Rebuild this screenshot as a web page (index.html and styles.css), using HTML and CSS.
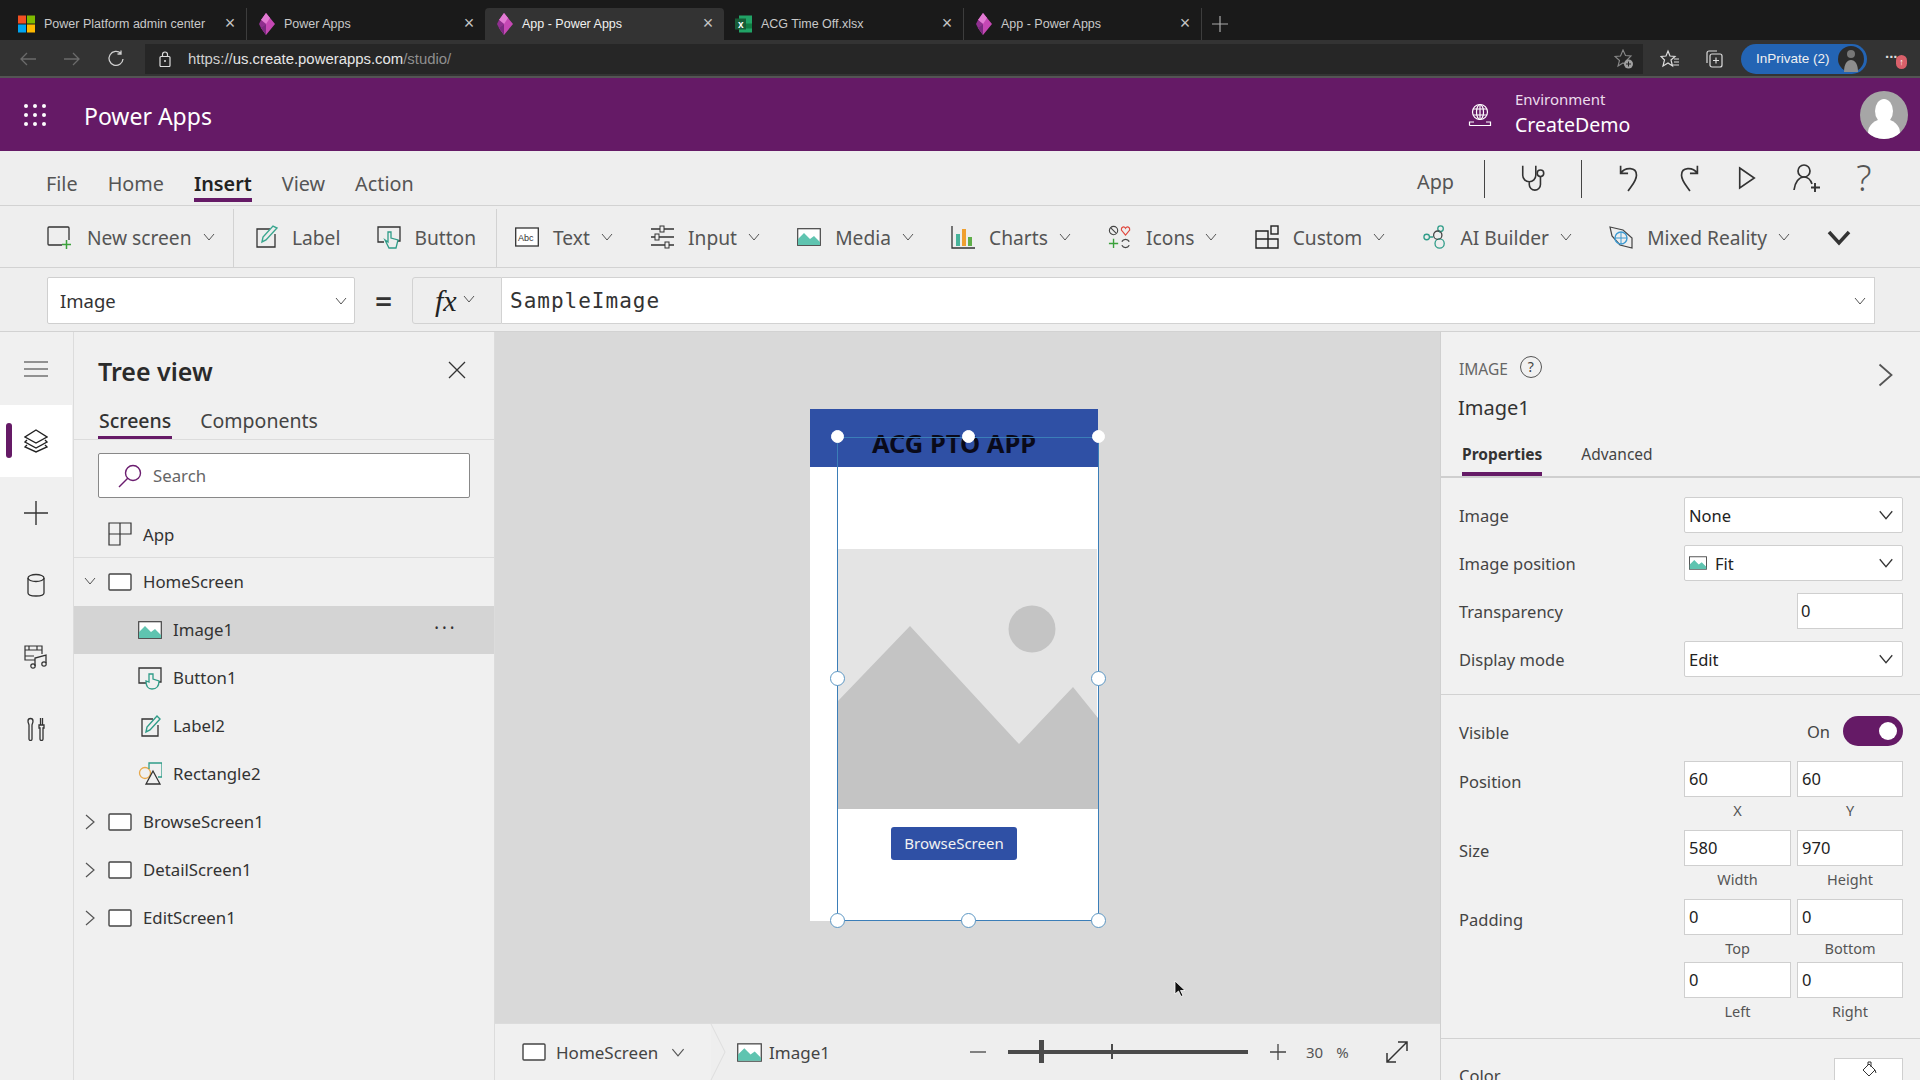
FILE: index.html
```html
<!DOCTYPE html>
<html>
<head>
    <meta charset="utf-8">
    <title>App - Power Apps</title>
    <link rel="stylesheet" href="styles.css">
</head>
<body>
    <svg class="defs" width="0" height="0">
        <symbol id="pa-logo" viewBox="0 0 17 24"><path d="M8 1 17 12 8 23 3 16 6 12 3 8Z" fill="#c548b4"/><path d="M3 8 8 1 12 6 8 12Z" fill="#e27bd3"/><path d="M1 12 3 8 8 12 3 16Z" fill="#8f2f8f"/><path d="M8 23 3 16 8 12Z" fill="#7a2a80"/></symbol>
        <symbol id="chev-down" viewBox="0 0 12 8"><path d="M1 1 6 7 11 1" fill="none" stroke="currentColor" stroke-width="1"/></symbol>
        <symbol id="chev-right" viewBox="0 0 10 16"><path d="M1 1 9 8 1 15" fill="none" stroke="#555" stroke-width="1.2"/></symbol>
        <symbol id="screen" viewBox="0 0 24 18"><rect x="1" y="1" width="22" height="16" rx="1" fill="#fff" stroke="#444" stroke-width="1.4"/></symbol>
        <symbol id="image" viewBox="0 0 24 18"><rect x=".7" y=".7" width="22.6" height="16.6" fill="#fff" stroke="#444" stroke-width="1.2"/><path d="M1 17V11L7 5 13 11 17 8 23 14V17Z" fill="#5fc4b0"/></symbol>
    </svg>

    <div class="tabbar">
        <div class="tab">
            <svg class="tab-icon" viewBox="0 0 17 17"><rect width="8" height="8" fill="#f25022"/><rect x="9" width="8" height="8" fill="#7fba00"/><rect y="9" width="8" height="8" fill="#00a4ef"/><rect x="9" y="9" width="8" height="8" fill="#ffb900"/></svg>
            <span class="tab-title">Power Platform admin center</span><span class="tab-close">×</span>
        </div>
        <div class="tab tab-sep">
            <svg class="tab-icon"><use href="#pa-logo"/></svg>
            <span class="tab-title">Power Apps</span><span class="tab-close">×</span>
        </div>
        <div class="tab active">
            <svg class="tab-icon"><use href="#pa-logo"/></svg>
            <span class="tab-title">App - Power Apps</span><span class="tab-close">×</span>
        </div>
        <div class="tab">
            <svg class="tab-icon" viewBox="0 0 17 17"><rect x="4" y="0" width="13" height="17" fill="#21a366"/><rect x="4" y="8" width="13" height="5" fill="#107c41"/><rect y="3" width="11" height="11" fill="#185c37"/><text x="3" y="12" class="xl-x">x</text></svg>
            <span class="tab-title">ACG Time Off.xlsx</span><span class="tab-close">×</span>
        </div>
        <div class="tab tab-sep tab-end">
            <svg class="tab-icon"><use href="#pa-logo"/></svg>
            <span class="tab-title">App - Power Apps</span><span class="tab-close">×</span>
        </div>
        <svg class="new-tab" viewBox="0 0 16 16"><path d="M8 0V16M0 8H16" stroke="#aaa" stroke-width="1.2"/></svg>
    </div>

    <div class="addressbar">
        <svg class="nav-icon" viewBox="0 0 18 18"><path d="M17 9H2M8 3 2 9 8 15" fill="none" stroke="#6b6b6b" stroke-width="1.3"/></svg>
        <svg class="nav-icon" viewBox="0 0 18 18"><path d="M1 9H16M10 3 16 9 10 15" fill="none" stroke="#6b6b6b" stroke-width="1.3"/></svg>
        <svg class="nav-icon" viewBox="0 0 18 18"><path d="M14 3.5A7 7 0 1 0 16 9M14 .5V4H10.5" fill="none" stroke="#d0d0d0" stroke-width="1.3"/></svg>
        <div class="url-field">
            <svg class="lock" viewBox="0 0 12 16"><rect x="1" y="5.5" width="10" height="10" rx="1" fill="none" stroke="#ddd" stroke-width="1.2"/><path d="M3.5 5.5V3.5A2.5 2.5 0 0 1 8.5 3.5V5.5" fill="none" stroke="#ddd" stroke-width="1.2"/><circle cx="6" cy="10" r="1" fill="#ddd"/></svg>
            <span class="url"><span class="url-dim">https://</span><span class="url-host">us.create.powerapps.com</span><span class="url-dim">/studio/</span></span>
            <svg class="star-add" viewBox="0 0 20 20"><path d="M9 1 11.5 6.5 17 7 13 11 14 17 9 14 4 17 5.5 11.5 1 7.5 6.5 7Z" fill="none" stroke="#888" stroke-width="1.1"/><circle cx="14.5" cy="15" r="4.5" fill="#a0a0a0"/><path d="M14.5 12.5V17.5M12 15H17" stroke="#262626"/></svg>
        </div>
        <svg class="bar-icon" viewBox="0 0 20 20"><path d="M8 2 10 7 15 7.5 11 11 12.5 17 8 14 3 17 4.5 11 1 7.5 6 7Z" fill="none" stroke="#ddd" stroke-width="1.2"/><path d="M14 10H19M14 13H19M13 16H19" stroke="#ddd"/></svg>
        <svg class="bar-icon" viewBox="0 0 20 20"><rect x="6" y="5" width="12" height="13" rx="2" fill="none" stroke="#ddd" stroke-width="1.2"/><path d="M12 8.5V14.5M9 11.5H15M3 14V4A2 2 0 0 1 5 2H13" fill="none" stroke="#ddd" stroke-width="1.2"/></svg>
        <div class="inprivate">
            <span>InPrivate (2)</span>
            <svg class="inprivate-pic" viewBox="0 0 26 26"><circle cx="13" cy="13" r="13" fill="#2b2b2b"/><circle cx="13" cy="8" r="4" fill="#777"/><path d="M6 26C6 18 9 14 13 14 17 14 20 18 20 26Z" fill="#8d8d8d"/></svg>
        </div>
        <div class="more-wrap">
            <span class="more-dots">...</span>
            <span class="more-badge">↑</span>
        </div>
    </div>

    <div class="app-header">
        <svg class="waffle" viewBox="0 0 24 24" fill="#fff"><circle cx="3" cy="3" r="2"/><circle cx="12" cy="3" r="2"/><circle cx="21" cy="3" r="2"/><circle cx="3" cy="12" r="2"/><circle cx="12" cy="12" r="2"/><circle cx="21" cy="12" r="2"/><circle cx="3" cy="21" r="2"/><circle cx="12" cy="21" r="2"/><circle cx="21" cy="21" r="2"/></svg>
        <div class="app-name">Power Apps</div>
        <svg class="env-icon" viewBox="0 0 24 24"><g fill="none" stroke="#fff" stroke-width="1.2"><circle cx="12" cy="9" r="7.5"/><ellipse cx="12" cy="9" rx="3.5" ry="7.5"/><path d="M5 6H19M5 12H19M12 1.5V16.5M1.5 22.5H22.5V19H18M6 19H1.5V22.5"/></g></svg>
        <div class="env">
            <div class="env-label">Environment</div>
            <div class="env-name">CreateDemo</div>
        </div>
        <svg class="user-pic" viewBox="0 0 48 48"><defs><clipPath id="user-clip"><circle cx="24" cy="24" r="24"/></clipPath></defs><circle cx="24" cy="24" r="24" fill="#a6a6a6"/><g clip-path="url(#user-clip)" fill="#fff"><ellipse cx="24" cy="20" rx="9" ry="12"/><ellipse cx="24" cy="42" rx="16" ry="14"/></g></svg>
    </div>

    <div class="menu">
        <div class="menu-item">File</div>
        <div class="menu-item">Home</div>
        <div class="menu-item selected">Insert</div>
        <div class="menu-item">View</div>
        <div class="menu-item">Action</div>
        <div class="menu-right">
            <span class="menu-app">App</span>
            <span class="menu-sep"></span>
            <svg class="tool stetho" viewBox="0 0 28 30"><path d="M3 2V12A7 7 0 0 0 17 12V2M10 19V22A6 6 0 0 0 22 22V14" fill="none" stroke="#333" stroke-width="1.7"/><circle cx="22" cy="10" r="3.5" fill="none" stroke="#333" stroke-width="1.7"/></svg>
            <span class="menu-sep"></span>
            <svg class="tool undo" viewBox="0 0 24 30"><path d="M3 2V10H11M3 10C8 3 20 3 20 12 20 18 15 23 11 29" fill="none" stroke="#333" stroke-width="1.8"/></svg>
            <svg class="tool redo" viewBox="0 0 24 30"><path d="M21 2V10H13M21 10C16 3 4 3 4 12 4 18 9 23 13 29" fill="none" stroke="#333" stroke-width="1.8"/></svg>
            <svg class="tool play" viewBox="0 0 22 26"><path d="M3 2 19 13 3 24Z" fill="none" stroke="#333" stroke-width="1.8"/></svg>
            <svg class="tool share" viewBox="0 0 28 28"><circle cx="11" cy="7" r="6" fill="none" stroke="#333" stroke-width="1.7"/><path d="M1 26C2 18 6 13 11 13 16 13 18 17 19 20" fill="none" stroke="#333" stroke-width="1.7"/><path d="M22 19V28M18 23.5H27" fill="none" stroke="#333" stroke-width="1.9"/></svg>
            <span class="help">?</span>
        </div>
    </div>

    <div class="ribbon">
        <div class="rib-group first">
            <div class="rib-item">
                <svg class="rib-icon" viewBox="0 0 24 24"><rect x="1" y="2" width="21" height="18" rx="1" fill="none" stroke="#333" stroke-width="1.3"/><rect x="15" y="15" width="9" height="9" fill="#eee"/><path d="M19.5 15V24M15 19.5H24" stroke="#3aa13a" stroke-width="1.5"/></svg>
                <span>New screen</span>
                <svg class="chev"><use href="#chev-down"/></svg>
            </div>
        </div>
        <div class="rib-group second">
            <div class="rib-item">
                <svg class="rib-icon" viewBox="0 0 24 24"><path d="M15 4H2V22H20V9" fill="none" stroke="#333" stroke-width="1.3"/><path d="M7 17 8 12 18 1 22 3 11 15Z" fill="none" stroke="#3aa68f" stroke-width="1.4"/></svg>
                <span>Label</span>
            </div>
            <div class="rib-item">
                <svg class="rib-icon" viewBox="0 0 24 24"><path d="M7 17H1V2H23V16H20" fill="none" stroke="#333" stroke-width="1.3"/><path d="M11 7V17L8 15 12 23H19L21 15 14 13V7Z" fill="#eee" stroke="#2f9c88" stroke-width="1.3"/></svg>
                <span>Button</span>
            </div>
        </div>
        <div class="rib-group rest">
            <div class="rib-item">
                <svg class="rib-icon" viewBox="0 0 24 20"><rect x=".7" y="1" width="22.6" height="18" fill="#fff" stroke="#333" stroke-width="1.3"/><text x="3" y="14" class="abc">Abc</text></svg>
                <span>Text</span>
                <svg class="chev"><use href="#chev-down"/></svg>
            </div>
            <div class="rib-item">
                <svg class="rib-icon" viewBox="0 0 24 24"><path d="M1 4H24M1 12H24M1 20H24" stroke="#333" stroke-width="1.3"/><rect x="10" y="1" width="4" height="6" fill="#eee" stroke="#333"/><rect x="5" y="9" width="4" height="6" fill="#eee" stroke="#333"/><rect x="15" y="17" width="4" height="6" fill="#eee" stroke="#333"/></svg>
                <span>Input</span>
                <svg class="chev"><use href="#chev-down"/></svg>
            </div>
            <div class="rib-item">
                <svg class="rib-icon"><use href="#image"/></svg>
                <span>Media</span>
                <svg class="chev"><use href="#chev-down"/></svg>
            </div>
            <div class="rib-item">
                <svg class="rib-icon" viewBox="0 0 24 24"><path d="M1 1V23H24" fill="none" stroke="#333" stroke-width="1.3"/><rect x="5" y="9" width="4" height="12" fill="#47b39a"/><rect x="11" y="4" width="4" height="17" fill="#f0a030"/><rect x="17" y="12" width="4" height="9" fill="#5fae4a"/></svg>
                <span>Charts</span>
                <svg class="chev"><use href="#chev-down"/></svg>
            </div>
            <div class="rib-item">
                <svg class="rib-icon" viewBox="0 0 26 26"><circle cx="6" cy="6" r="4.5" fill="none" stroke="#444" stroke-width="1.2"/><path d="M3 3 9 9" stroke="#444" stroke-width="1.2"/><path d="M19 11 14.5 5.5C14 2 17.5 1 19 3.5 20.5 1 24 2 23.5 5.5Z" fill="none" stroke="#e0483e" stroke-width="1.3"/><path d="M6 15V25M1 20H11" stroke="#3aa13a" stroke-width="1.5"/><path d="M15 18A4.5 4.5 0 0 1 23 18M23 22A4.5 4.5 0 0 1 15 22" fill="none" stroke="#444" stroke-width="1.4"/></svg>
                <span>Icons</span>
                <svg class="chev"><use href="#chev-down"/></svg>
            </div>
            <div class="rib-item">
                <svg class="rib-icon" viewBox="0 0 24 24"><path d="M1 6H13V23H1ZM1 14H23V23H13" fill="none" stroke="#222" stroke-width="1.4"/><rect x="16" y="1" width="7" height="8" fill="none" stroke="#222" stroke-width="1.4"/></svg>
                <span>Custom</span>
                <svg class="chev"><use href="#chev-down"/></svg>
            </div>
            <div class="rib-item">
                <svg class="rib-icon" viewBox="0 0 26 26"><g fill="none" stroke="#2f9c88" stroke-width="1.4"><circle cx="4" cy="13" r="3"/><circle cx="19" cy="4" r="3"/><circle cx="18" cy="20" r="5"/><circle cx="16" cy="11" r="4.5" stroke="#444"/><path d="M7 13H11M18 7V8M17 15V16"/></g></svg>
                <span>AI Builder</span>
                <svg class="chev"><use href="#chev-down"/></svg>
            </div>
            <div class="rib-item">
                <svg class="rib-icon" viewBox="0 0 24 24"><path d="M1 2 14 5 23 13V23L11 20 3 11Z" fill="none" stroke="#444" stroke-width="1.2"/><circle cx="12" cy="13" r="6" fill="none" stroke="#3d9ad1" stroke-width="1.4"/><path d="M6 13H18M12 7V19" stroke="#3d9ad1"/></svg>
                <span>Mixed Reality</span>
                <svg class="chev"><use href="#chev-down"/></svg>
            </div>
            <svg class="rib-more" viewBox="0 0 24 16"><path d="M2 2 12 13 22 2" fill="none" stroke="#333" stroke-width="3.5"/></svg>
        </div>
    </div>

    <div class="formula">
        <div class="prop-select">
            <span>Image</span>
            <svg class="chev"><use href="#chev-down"/></svg>
        </div>
        <div class="equals">=</div>
        <div class="fx-box">
            <span class="fx">fx</span>
            <svg class="chev"><use href="#chev-down"/></svg>
        </div>
        <div class="formula-input">
            <span class="code">SampleImage</span>
            <svg class="chev"><use href="#chev-down"/></svg>
        </div>
    </div>

    <div class="main">
        <div class="rail">
            <div class="rail-item">
                <svg class="rail-icon" viewBox="0 0 24 24"><path d="M0 5H24M0 12H24M0 19H24" stroke="#333" stroke-width="1.2"/></svg>
            </div>
            <div class="rail-item current">
                <span class="rail-bar"></span>
                <svg class="rail-icon" viewBox="0 0 24 24"><path d="M12 1 23 8 12 14 1 8Z" fill="none" stroke="#222" stroke-width="1.4"/><path d="M3 11 1 13 12 19 23 13 21 11M3 16 1 18 12 23 23 18 21 16" fill="none" stroke="#222" stroke-width="1.4"/></svg>
            </div>
            <div class="rail-item">
                <svg class="rail-icon" viewBox="0 0 24 24"><path d="M0 12H24M12 0V24" stroke="#333" stroke-width="1.4"/></svg>
            </div>
            <div class="rail-item">
                <svg class="rail-icon" viewBox="0 0 24 24"><ellipse cx="12" cy="5" rx="8" ry="3.5" fill="none" stroke="#333" stroke-width="1.3"/><path d="M4 5V20C4 24 20 24 20 20V5" fill="none" stroke="#333" stroke-width="1.3"/></svg>
            </div>
            <div class="rail-item">
                <svg class="rail-icon" viewBox="0 0 24 24"><path d="M11 15H1V1H18V9M1 5H18M1 11H10M5 1V5M13 1V5" fill="none" stroke="#333" stroke-width="1.2"/><path d="M11 21V13L22 10V18" fill="none" stroke="#333" stroke-width="1.3"/><circle cx="9" cy="21" r="2.2" fill="none" stroke="#333" stroke-width="1.2"/><circle cx="20" cy="19" r="2.2" fill="none" stroke="#333" stroke-width="1.2"/></svg>
            </div>
            <div class="rail-item">
                <svg class="rail-icon" viewBox="0 0 24 24"><path d="M4 4A2.5 2.5 0 0 1 9 4C9 6 8 7 8 8V22A1.5 1.5 0 0 1 5 22V8C5 7 4 6 4 4ZM15 8H20V11H19V22A1.5 1.5 0 0 1 16 22V11H15ZM16.5 8V1M18.5 8V1" fill="none" stroke="#333" stroke-width="1.3"/></svg>
            </div>
        </div>

        <div class="tree">
            <div class="tree-head">
                <div class="tree-title">Tree view</div>
                <svg class="tree-close" viewBox="0 0 18 18"><path d="M1 1 17 17M17 1 1 17" stroke="#333" stroke-width="1.3"/></svg>
            </div>
            <div class="tree-tabs">
                <div class="tree-tab on">Screens</div>
                <div class="tree-tab">Components</div>
            </div>
            <div class="search">
                <svg class="search-icon" viewBox="0 0 24 24"><circle cx="15" cy="9" r="7.5" fill="none" stroke="#6b1d6f" stroke-width="1.4"/><path d="M10 14 1 23" stroke="#6b1d6f" stroke-width="1.4"/></svg>
                <span>Search</span>
            </div>
            <div class="tree-app">
                <svg class="row-icon" viewBox="0 0 24 24"><path d="M1 1H23V12H12V23H1ZM1 12H12V1" fill="none" stroke="#333" stroke-width="1.2"/></svg>
                <span>App</span>
            </div>
            <div class="row screen-row">
                <svg class="twist down"><use href="#chev-down"/></svg>
                <svg class="row-icon flat"><use href="#screen"/></svg>
                <span>HomeScreen</span>
            </div>
            <div class="row child picked">
                <svg class="row-icon flat"><use href="#image"/></svg>
                <span>Image1</span>
                <span class="dots">•••</span>
            </div>
            <div class="row child">
                <svg class="row-icon" viewBox="0 0 24 24"><path d="M8 17H1V2H23V16H21" fill="none" stroke="#333" stroke-width="1.3"/><path d="M11 8V16L8 15C8 20 10 23 14 23 18 23 21 21 21 15L15 13V8Z" fill="#f0f0f0" stroke="#2f9c88" stroke-width="1.3"/></svg>
                <span>Button1</span>
            </div>
            <div class="row child">
                <svg class="row-icon" viewBox="0 0 24 24"><path d="M15 5H4V22H20V11" fill="none" stroke="#333" stroke-width="1.3"/><path d="M8 18 9 13 19 2 22 5 12 16Z" fill="none" stroke="#2f9c88" stroke-width="1.4"/></svg>
                <span>Label2</span>
            </div>
            <div class="row child">
                <svg class="row-icon" viewBox="0 0 24 24"><circle cx="7" cy="11" r="5.5" fill="none" stroke="#e8a84a" stroke-width="1.3"/><path d="M11 7V1H24V15H20" fill="none" stroke="#2f9c88" stroke-width="1.3"/><path d="M15 9 8 22H22Z" fill="#f0f0f0" stroke="#333" stroke-width="1.3"/></svg>
                <span>Rectangle2</span>
            </div>
            <div class="row screen-row">
                <svg class="twist"><use href="#chev-right"/></svg>
                <svg class="row-icon flat"><use href="#screen"/></svg>
                <span>BrowseScreen1</span>
            </div>
            <div class="row screen-row">
                <svg class="twist"><use href="#chev-right"/></svg>
                <svg class="row-icon flat"><use href="#screen"/></svg>
                <span>DetailScreen1</span>
            </div>
            <div class="row screen-row">
                <svg class="twist"><use href="#chev-right"/></svg>
                <svg class="row-icon flat"><use href="#screen"/></svg>
                <span>EditScreen1</span>
            </div>
        </div>

        <div class="stage">
            <div class="canvas">
                <div class="phone">
                    <div class="phone-head"></div>
                </div>
                <svg class="placeholder" viewBox="0 0 261 260" preserveAspectRatio="none">
                    <rect x="1" width="259" height="260" fill="#e4e4e4"/>
                    <circle cx="195" cy="80" r="23.5" fill="#c4c4c4"/>
                    <path d="M0 153 73 77 182 195 236 138 261 169V260H0Z" fill="#c4c4c4"/>
                </svg>
                <div class="phone-title">ACG PTO APP</div>
                <div class="phone-btn">BrowseScreen</div>
                <div class="sel-box"></div>
                <span class="grip solid g-tl"></span>
                <span class="grip solid g-tc"></span>
                <span class="grip solid g-tr"></span>
                <span class="grip g-ml"></span>
                <span class="grip g-mr"></span>
                <span class="grip g-bl"></span>
                <span class="grip g-bc"></span>
                <span class="grip g-br"></span>
                <svg class="pointer" viewBox="0 0 12 18"><path d="M1 1V14L4.5 11 7 16.5 9 15.5 6.5 10.5 11 10.5Z" fill="#111" stroke="#fff" stroke-width=".8"/></svg>
            </div>
            <div class="stage-bar">
                <div class="crumb first-crumb">
                    <svg class="crumb-icon"><use href="#screen"/></svg>
                    <span>HomeScreen</span>
                    <svg class="crumb-chev"><use href="#chev-down"/></svg>
                    <svg class="crumb-arrow" viewBox="0 0 16 58" preserveAspectRatio="none"><path d="M1 0 15 29 1 58" fill="none" stroke="#dcdcdc"/></svg>
                </div>
                <div class="crumb">
                    <svg class="crumb-image"><use href="#image"/></svg>
                    <span>Image1</span>
                </div>
                <div class="zoom">
                    <svg class="zoom-sign" viewBox="0 0 16 16"><path d="M0 8H16" stroke="#444" stroke-width="1.3"/></svg>
                    <div class="slider"><span class="thumb"></span><span class="tick"></span></div>
                    <svg class="zoom-sign" viewBox="0 0 16 16"><path d="M0 8H16M8 0V16" stroke="#444" stroke-width="1.3"/></svg>
                    <span class="zoom-num">30</span>
                    <span class="zoom-pct">%</span>
                    <svg class="expand" viewBox="0 0 24 24"><path d="M2 22 22 2M13 2H22V11M2 13V22H11" fill="none" stroke="#333" stroke-width="1.5"/></svg>
                </div>
            </div>
        </div>

        <div class="props">
            <div class="props-kind">
                <span>IMAGE</span>
                <span class="kind-help">?</span>
                <svg class="props-collapse"><use href="#chev-right"/></svg>
            </div>
            <div class="props-name">Image1</div>
            <div class="props-tabs">
                <div class="props-tab on">Properties</div>
                <div class="props-tab">Advanced</div>
            </div>
            <div class="props-group top-group">
                <div class="prop-row">
                    <label>Image</label>
                    <div class="dd"><span>None</span><svg class="dd-chev"><use href="#chev-down"/></svg></div>
                </div>
                <div class="prop-row">
                    <label>Image position</label>
                    <div class="dd"><svg class="dd-image"><use href="#image"/></svg><span>Fit</span><svg class="dd-chev"><use href="#chev-down"/></svg></div>
                </div>
                <div class="prop-row">
                    <label>Transparency</label>
                    <div class="pair"><div></div><div class="num">0</div></div>
                </div>
                <div class="prop-row">
                    <label>Display mode</label>
                    <div class="dd"><span>Edit</span><svg class="dd-chev"><use href="#chev-down"/></svg></div>
                </div>
            </div>
            <div class="props-group layout-group">
                <div class="visible-row">
                    <label>Visible</label>
                    <span class="on-text">On</span>
                    <span class="toggle"><span class="knob"></span></span>
                </div>
                <div class="prop-row tall">
                    <label>Position</label>
                    <div class="pair">
                        <div class="field"><div class="num">60</div><small>X</small></div>
                        <div class="field"><div class="num">60</div><small>Y</small></div>
                    </div>
                </div>
                <div class="prop-row tall">
                    <label>Size</label>
                    <div class="pair">
                        <div class="field"><div class="num">580</div><small>Width</small></div>
                        <div class="field"><div class="num">970</div><small>Height</small></div>
                    </div>
                </div>
                <div class="prop-row tall">
                    <label>Padding</label>
                    <div class="pair">
                        <div class="field"><div class="num">0</div><small>Top</small></div>
                        <div class="field"><div class="num">0</div><small>Bottom</small></div>
                    </div>
                </div>
                <div class="prop-row tall">
                    <label></label>
                    <div class="pair">
                        <div class="field"><div class="num">0</div><small>Left</small></div>
                        <div class="field"><div class="num">0</div><small>Right</small></div>
                    </div>
                </div>
            </div>
            <div class="color-row">
                <label>Color</label>
                <div class="color-box">
                    <svg class="bucket" viewBox="0 0 16 16"><path d="M2 9 8 3 14 9 8 15ZM7 4V1H10V6M14 9 15 12" fill="none" stroke="#333"/></svg>
                </div>
            </div>
        </div>
    </div>
</body>
</html>
```

FILE: styles.css
```css
* {
    box-sizing: border-box;
}

html, body {
    margin: 0;
    height: 1080px;
    overflow: hidden;
}

body {
    font-family: "Noto Sans", "Open Sans", sans-serif;
    color: #333;
    background: #eee;
}

.defs {
    position: absolute;
}

/* browser chrome */
.tabbar {
    height: 40px;
    background: #1a1a1a;
    display: flex;
    align-items: flex-end;
    padding-left: 7px;
}

.tab {
    width: 239px;
    height: 32px;
    padding: 0 10px 1px 11px;
    display: flex;
    align-items: center;
    color: #c9c9c9;
    font: 12.5px "Liberation Sans", sans-serif;
}

.tab.active {
    background: #333;
    border-radius: 4px 4px 0 0;
    color: #f0f0f0;
}

.tab-sep {
    border-left: 1px solid #3d3d3d;
}

.tab-end {
    border-right: 1px solid #3d3d3d;
}

.tab-icon {
    width: 17px;
    height: 24px;
    margin-right: 9px;
    flex: none;
}

.tab-title {
    flex: 1;
}

.tab-close {
    width: 12px;
    font-size: 18px;
    text-align: center;
    color: #c4c4c4;
}

.xl-x {
    font: bold 10px "Liberation Sans", sans-serif;
    fill: #fff;
}

.new-tab {
    width: 16px;
    height: 16px;
    margin: 0 0 8px 10px;
}

.addressbar {
    height: 38px;
    background: #333;
    border-bottom: 2px solid #545454;
    display: flex;
    align-items: center;
    padding: 1px 0 0 19px;
}

.nav-icon {
    width: 18px;
    height: 18px;
    margin-right: 26px;
    flex: none;
}

.url-field {
    width: 1498px;
    height: 30px;
    margin-left: -6px;
    background: #262626;
    display: flex;
    align-items: center;
    padding-left: 14px;
}

.lock {
    width: 12px;
    height: 16px;
    margin-right: 17px;
}

.url {
    flex: 1;
    font: 14.9px "Liberation Sans", sans-serif;
}

.url-dim {
    color: #8f8f8f;
}

.url-host {
    color: #e6e6e6;
}

.url .url-dim:first-child {
    color: #d0d0d0;
}

.star-add {
    width: 20px;
    height: 20px;
    margin-right: 9px;
}

.bar-icon {
    width: 20px;
    height: 20px;
    margin-left: 17px;
    margin-right: 7px;
    flex: none;
}

.bar-icon + .inprivate {
    margin-left: 10px;
}

.inprivate {
    width: 126px;
    height: 30px;
    border-radius: 15px;
    background: #2364b4;
    color: #f0f0f0;
    font: 13.5px "Liberation Sans", sans-serif;
    display: flex;
    align-items: center;
    justify-content: space-between;
    padding: 0 3px 0 15px;
}

.inprivate-pic {
    width: 26px;
    height: 26px;
}

.more-wrap {
    position: relative;
    flex: 1;
    height: 30px;
}

.more-dots {
    position: absolute;
    left: 18px;
    top: 0;
    color: #ddd;
    font: bold 15px "Liberation Sans", sans-serif;
}

.more-badge {
    position: absolute;
    left: 29px;
    top: 11px;
    width: 11px;
    height: 14px;
    border-radius: 6px;
    background: #d9606a;
    color: #fff;
    font: 9px/14px "Liberation Sans", sans-serif;
    text-align: center;
}

/* purple header */
.app-header {
    height: 73px;
    background: #651a66;
    color: #fff;
    display: flex;
    align-items: center;
    padding-left: 23px;
}

.waffle {
    width: 24px;
    height: 24px;
    flex: none;
}

.app-name {
    margin-left: 37px;
    padding-top: 2px;
    font-size: 23px;
    flex: 1;
}

.env-icon {
    width: 24px;
    height: 24px;
}

.env {
    width: 345px;
    margin-left: 23px;
    padding-top: 1px;
}

.env-label {
    font-size: 15px;
    line-height: 20px;
    color: #ecdcec;
}

.env-name {
    font-size: 19.5px;
    line-height: 32px;
}

.user-pic {
    width: 48px;
    height: 48px;
    margin-right: 12px;
}

/* menu row */
.menu {
    height: 55px;
    border-bottom: 1px solid #d2d2d2;
    display: flex;
    padding-left: 46px;
    font-size: 19.8px;
    color: #555;
}

.menu-item {
    height: 51px;
    margin-right: 30px;
    padding-top: 19px;
    line-height: 28px;
}

.menu-item.selected {
    color: #222;
    font-weight: 600;
    border-bottom: 4px solid #651a66;
}

.menu-right {
    margin-left: auto;
    display: flex;
    align-items: center;
    height: 54px;
}

.menu-app {
    margin-right: 30px;
    margin-top: 6px;
}

.menu-sep {
    width: 1px;
    height: 38px;
    background: #444;
    margin-top: 1px;
}

.tool {
    flex: none;
    height: 28px;
}

.stetho {
    width: 28px;
    margin: 0 34px;
}

.undo {
    width: 24px;
    margin-left: 35px;
}

.redo {
    width: 24px;
    margin-left: 36px;
}

.play {
    width: 20px;
    height: 26px;
    margin-left: 36px;
}

.share {
    width: 28px;
    margin-left: 36px;
}

.help {
    width: 30px;
    margin: 0 41px 0 28px;
    font-size: 36px;
    font-weight: 300;
    line-height: 40px;
    text-align: center;
}

/* ribbon */
.ribbon {
    height: 62px;
    border-bottom: 1px solid #d2d2d2;
    display: flex;
    font-size: 19.2px;
    color: #555;
}

.rib-group {
    display: flex;
    align-items: center;
    margin-top: 3px;
    height: 58px;
}

.rib-group.first {
    width: 234px;
    padding-left: 47px;
    border-right: 1px solid #d2d2d2;
}

.first .rib-icon {
    margin-right: 16px;
}

.rib-group.second {
    width: 263px;
    padding-left: 21px;
    gap: 37px;
    border-right: 1px solid #d2d2d2;
}

.second .rib-icon {
    margin-right: 13px;
}

.rib-group.rest {
    flex: 1;
    padding-left: 18px;
    gap: 37.2px;
}

.rib-item {
    display: flex;
    align-items: center;
    white-space: nowrap;
    margin-top: -2px;
}

.rib-icon {
    width: 24px;
    height: 24px;
    margin-right: 14px;
    flex: none;
}

.chev {
    width: 12px;
    height: 8px;
    margin-left: 11px;
    color: #555;
    flex: none;
}

.abc {
    font: 9px "Liberation Sans", sans-serif;
    fill: #333;
}

.rib-more {
    width: 24px;
    height: 16px;
}

/* formula bar */
.formula {
    height: 64px;
    border-bottom: 1px solid #d2d2d2;
    display: flex;
    align-items: center;
    padding: 2px 0 0 47px;
}

.prop-select {
    width: 308px;
    height: 47px;
    background: #fff;
    border: 1px solid #cfcfcf;
    border-radius: 2px;
    display: flex;
    align-items: center;
    justify-content: space-between;
    padding: 0 7px 0 12px;
    font-size: 18.5px;
}

.equals {
    width: 57px;
    text-align: center;
    font-size: 30px;
    font-weight: 600;
    line-height: 40px;
    color: #333;
}

.fx-box {
    width: 90px;
    height: 47px;
    border: 1px solid #d2d2d2;
    border-radius: 3px 0 0 3px;
    display: flex;
    align-items: center;
    padding-left: 22px;
}

.fx {
    font: italic 30px "Liberation Serif", serif;
    color: #222;
}

.fx-box .chev {
    margin-left: 6px;
    margin-top: -3px;
}

.formula-input {
    width: 1373px;
    height: 47px;
    background: #fff;
    border: 1px solid #d2d2d2;
    border-left: none;
    display: flex;
    align-items: center;
    justify-content: space-between;
    padding: 0 8px;
}

.code {
    font: 21px "DejaVu Sans Mono", monospace;
    color: #333;
    letter-spacing: 1px;
}

/* main area */
.main {
    height: 748px;
    display: flex;
}

.rail {
    width: 74px;
    border-right: 1px solid #dcdcdc;
    background: #f0f0f0;
    padding-top: 2px;
}

.rail-item {
    position: relative;
    width: 72px;
    height: 72px;
    display: flex;
    align-items: center;
    justify-content: center;
}

.rail-item:first-child {
    height: 70px;
    margin-bottom: 1px;
}

.rail-item.current {
    background: #fff;
}

.rail-bar {
    position: absolute;
    left: 6px;
    top: 18px;
    width: 6px;
    height: 35px;
    border-radius: 3px;
    background: #651a66;
}

.rail-icon {
    width: 24px;
    height: 24px;
}

.tree {
    width: 421px;
    background: #f0f0f0;
    border-right: 1px solid #dcdcdc;
    font-size: 16.8px;
    flex: none;
}

.tree-head {
    height: 66px;
    display: flex;
    align-items: center;
    justify-content: space-between;
    padding: 11px 28px 0 24px;
}

.tree-title {
    font-size: 25px;
    font-weight: 600;
    color: #2b2b2b;
}

.tree-close {
    width: 18px;
    height: 18px;
    margin-top: -2px;
}

.tree-tabs {
    height: 42px;
    display: flex;
    gap: 27px;
    padding-left: 24px;
    border-bottom: 1px solid #dcdcdc;
    font-size: 19.5px;
}

.tree-tab {
    height: 41px;
    padding: 8px 1px 0;
    line-height: 30px;
    color: #444;
}

.tree-tab.on {
    font-weight: 500;
    color: #333;
    border-bottom: 3px solid #651a66;
}

.search {
    width: 372px;
    height: 45px;
    margin: 13px 0 0 24px;
    background: #fff;
    border: 1px solid #888;
    border-radius: 2px;
    display: flex;
    align-items: center;
    padding-left: 19px;
    color: #666;
}

.search-icon {
    width: 24px;
    height: 24px;
    margin-right: 11px;
}

.tree-app {
    height: 60px;
    padding: 13px 0 0 34px;
    display: flex;
    align-items: center;
    border-bottom: 1px solid #dcdcdc;
}

.row-icon {
    width: 24px;
    height: 24px;
    margin-right: 11px;
    flex: none;
}

.row-icon.flat {
    height: 18px;
}

.row {
    position: relative;
    height: 48px;
    padding-bottom: 1px;
    display: flex;
    align-items: center;
}

.screen-row {
    padding-left: 34px;
}

.child {
    padding-left: 64px;
}

.picked {
    background: #d4d4d4;
}

.twist {
    position: absolute;
    left: 11px;
    top: 16px;
    width: 10px;
    height: 16px;
}

.twist.down {
    left: 10px;
    top: 19px;
    width: 12px;
    height: 8px;
    color: #555;
}

.dots {
    position: absolute;
    right: 36px;
    top: 0;
    font-size: 10px;
    line-height: 44px;
    letter-spacing: 4px;
    color: #333;
}

/* canvas */
.stage {
    width: 945px;
    flex: none;
    display: flex;
    flex-direction: column;
    background: #d9d9d9;
}

.canvas {
    position: relative;
    height: 691px;
}

.phone {
    position: absolute;
    left: 315px;
    top: 77px;
    width: 288px;
    height: 512px;
    background: #fff;
}

.phone-head {
    height: 58px;
    background: #2f50a5;
}

.placeholder {
    position: absolute;
    left: 342px;
    top: 217px;
    width: 261px;
    height: 260px;
}

.phone-title {
    position: absolute;
    left: 315px;
    top: 94px;
    width: 288px;
    text-align: center;
    font-size: 25.5px;
    line-height: 34px;
    font-weight: 700;
    color: #0a0a1a;
}

.phone-btn {
    position: absolute;
    left: 396px;
    top: 495px;
    width: 126px;
    height: 33px;
    background: #2f50a5;
    border-radius: 3px;
    color: #f2f2f2;
    font-size: 15px;
    line-height: 32px;
    text-align: center;
}

.sel-box {
    position: absolute;
    left: 342px;
    top: 105px;
    width: 262px;
    height: 484px;
    border: 1px solid #3b7eb8;
}

.grip {
    position: absolute;
    width: 15px;
    height: 15px;
    border-radius: 50%;
    background: #fff;
    border: 1.5px solid #5c97c4;
}

.grip.solid {
    width: 13px;
    height: 13px;
    border-color: #fff;
    margin: 1px;
}

.g-tl { left: 335px; top: 97px; }
.g-tc { left: 466px; top: 97px; }
.g-tr { left: 596px; top: 97px; }
.g-ml { left: 335px; top: 339px; }
.g-mr { left: 596px; top: 339px; }
.g-bl { left: 335px; top: 581px; }
.g-bc { left: 466px; top: 581px; }
.g-br { left: 596px; top: 581px; }

.pointer {
    position: absolute;
    left: 679px;
    top: 648px;
    width: 12px;
    height: 18px;
}

.stage-bar {
    height: 57px;
    background: #eee;
    border-top: 1px solid #dcdcdc;
    display: flex;
    align-items: center;
    font-size: 17px;
    color: #444;
}

.crumb {
    display: flex;
    align-items: center;
}

.first-crumb {
    position: relative;
    width: 216px;
    height: 56px;
    padding-left: 27px;
    background: #f0f0f0;
}

.crumb-icon {
    width: 24px;
    height: 18px;
    margin-right: 10px;
}

.crumb-chev {
    width: 16px;
    height: 9px;
    margin-left: 12px;
    color: #555;
}

.crumb-arrow {
    position: absolute;
    right: -15px;
    top: 0;
    width: 16px;
    height: 56px;
}

.crumb-image {
    width: 25px;
    height: 19px;
    margin: 0 7px 0 26px;
}

.zoom {
    margin-left: 140px;
    display: flex;
    align-items: center;
    color: #555;
    font-size: 15px;
}

.zoom-sign {
    width: 16px;
    height: 16px;
    flex: none;
}

.slider {
    position: relative;
    width: 240px;
    height: 4px;
    margin: 0 22px 0 22px;
    background: #4a4a4a;
}

.thumb {
    position: absolute;
    left: 31px;
    top: -10px;
    width: 5px;
    height: 23px;
    background: #4a4a4a;
}

.tick {
    position: absolute;
    left: 103px;
    top: -6px;
    width: 2px;
    height: 15px;
    background: #4a4a4a;
}

.zoom-num {
    margin-left: 20px;
}

.zoom-pct {
    margin-left: 13px;
}

.expand {
    width: 24px;
    height: 24px;
    margin-left: 36px;
}

/* properties */
.props {
    flex: 1;
    background: #f1f1f1;
    border-left: 1px solid #d0d0d0;
    font-size: 16.5px;
    color: #444;
}

.props-kind {
    position: relative;
    height: 62px;
    padding: 24px 0 0 18px;
    display: flex;
    align-items: flex-start;
    font-size: 15.5px;
    line-height: 26px;
    color: #666;
}

.kind-help {
    width: 22px;
    height: 22px;
    margin: 0 0 0 12px;
    border: 1.2px solid #555;
    border-radius: 50%;
    text-align: center;
    font-size: 14px;
    line-height: 20px;
    color: #444;
}

.props-collapse {
    position: absolute;
    left: 437px;
    top: 31px;
    width: 15px;
    height: 24px;
}

.props-name {
    height: 34px;
    padding-left: 17px;
    font-size: 20px;
    line-height: 28px;
    color: #333;
}

.props-tabs {
    height: 50px;
    display: flex;
    gap: 39px;
    padding: 13px 0 0 21px;
    border-bottom: 2px solid #cfcfcf;
    font-size: 15.5px;
}

.props-tab {
    height: 35px;
    line-height: 26px;
    color: #444;
}

.props-tab.on {
    font-weight: 700;
    color: #333;
    border-bottom: 4px solid #651a66;
}

.props-group {
    border-bottom: 1px solid #d2d2d2;
    padding-left: 18px;
}

.top-group {
    height: 217px;
    padding-top: 19px;
}

.prop-row {
    height: 48px;
    display: flex;
    justify-content: space-between;
    align-items: flex-start;
    padding-right: 17px;
}

.prop-row label {
    line-height: 38px;
}

.prop-row.tall label {
    line-height: 42px;
}

.dd {
    width: 219px;
    height: 36px;
    background: #fff;
    border: 1px solid #cfcfcf;
    border-radius: 2px;
    display: flex;
    align-items: center;
    padding: 0 4px;
    font-size: 16.5px;
    color: #222;
}

.dd span {
    flex: 1;
}

.dd-chev {
    width: 18px;
    height: 10px;
    margin-right: 3px;
    color: #333;
}

.dd-image {
    width: 18px;
    height: 14px;
    margin-right: 8px;
}

.pair {
    width: 219px;
    display: grid;
    grid-template-columns: 107px 106px;
    gap: 6px;
}

.num {
    height: 36px;
    background: #fff;
    border: 1px solid #cfcfcf;
    padding-left: 3px;
    line-height: 34px;
    color: #222;
}

.field .num {
    padding-left: 4px;
}

.field small {
    display: block;
    text-align: center;
    font-size: 14.5px;
    line-height: 26px;
    color: #555;
}

.layout-group {
    height: 344px;
    padding-top: 21px;
}

.visible-row {
    height: 45px;
    display: flex;
    align-items: flex-start;
    padding-right: 17px;
}

.visible-row label {
    flex: 1;
    line-height: 34px;
}

.on-text {
    margin-right: 13px;
    line-height: 32px;
}

.toggle {
    width: 60px;
    height: 30px;
    border-radius: 15px;
    background: #651a66;
    display: flex;
    align-items: center;
    justify-content: flex-end;
    padding-right: 6px;
}

.knob {
    width: 18px;
    height: 18px;
    border-radius: 50%;
    background: #fff;
}

.prop-row.tall {
    height: 69px;
}

.prop-row.tall:last-child {
    height: 63px;
}

.prop-row.tall:nth-child(4) {
    height: 63px;
}

.color-row {
    display: flex;
    justify-content: space-between;
    padding: 19px 17px 0 18px;
}

.color-row label {
    line-height: 36px;
}

.color-box {
    width: 69px;
    height: 36px;
    background: #fff;
    border: 1px solid #cfcfcf;
    text-align: center;
}

.bucket {
    width: 16px;
    height: 16px;
}
```
